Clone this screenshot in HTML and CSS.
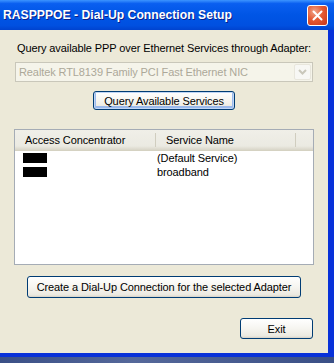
FILE: index.html
```html
<!DOCTYPE html>
<html lang="en">
<head>
    <meta charset="UTF-8">
    <title>RASPPPOE - Dial-Up Connection Setup</title>
    <link rel="stylesheet" href="styles.css">
</head>
<body>
    <div class="window">
        <div class="titlebar">
            <span class="title">RASPPPOE - Dial-Up Connection Setup</span>
            <button class="close-btn" aria-label="Close">
                <svg width="11" height="11" viewBox="0 0 11 11">
                    <path d="M1.5 1.5 L9.5 9.5 M9.5 1.5 L1.5 9.5" stroke="#fff" stroke-width="2" stroke-linecap="round"/>
                </svg>
            </button>
        </div>

        <div class="client">
            <div class="prompt">Query available PPP over Ethernet Services through Adapter:</div>

            <!-- Adapter combo (disabled) -->
            <div class="combo">
                <span class="combo-text">Realtek RTL8139 Family PCI Fast Ethernet NIC</span>
                <span class="combo-arrow">
                    <svg width="9" height="6" viewBox="0 0 9 6">
                        <path d="M1 1 L4.5 4.5 L8 1" fill="none" stroke="#c9c7ba" stroke-width="2"/>
                    </svg>
                </span>
            </div>

            <button class="xp-btn query-btn">Query Available Services</button>

            <!-- Service list -->
            <div class="listview">
                <div class="list-header">
                    <div class="col col-ac">Access Concentrator</div>
                    <div class="col col-sn">Service Name</div>
                    <div class="col col-rest"></div>
                </div>
                <div class="list-row">
                    <div class="cell cell-ac"><span class="redact r1"></span></div>
                    <div class="cell">(Default Service)</div>
                </div>
                <div class="list-row">
                    <div class="cell cell-ac"><span class="redact r2"></span></div>
                    <div class="cell">broadband</div>
                </div>
            </div>

            <button class="xp-btn create-btn">Create a Dial-Up Connection for the selected Adapter</button>

            <div class="footer">
                <button class="xp-btn exit-btn">Exit</button>
            </div>
        </div>
    </div>
    <div class="desktop"></div>
</body>
</html>
```

FILE: styles.css
```css
* {
    margin: 0;
    padding: 0;
    box-sizing: border-box;
}

body {
    width: 334px;
    height: 363px;
    overflow: hidden;
    font-family: 'Liberation Sans', Arial, sans-serif;
    font-size: 11px;
    letter-spacing: -0.1px;
    color: #000;
    background: #3a4f86;
}

.window {
    display: flex;
    flex-direction: column;
    height: 357px;
    border-right: 6px solid #0831d9;
    border-bottom: 4px solid #0831d9;
    background: #ece9d8;
}

.titlebar {
    height: 30px;
    display: flex;
    align-items: center;
    justify-content: space-between;
    padding: 0 6px 0 3px;
    margin-right: -6px;
    background: linear-gradient(#3d95ff 0%, #0a5ff0 12%, #0055e5 50%, #0050e0 85%, #0043cf 100%);
}

.title {
    color: #fff;
    font-family: 'Liberation Sans', Arial, sans-serif;
    font-weight: bold;
    font-size: 12.2px;
    letter-spacing: 0;
    text-shadow: 1px 1px 0 #0a1e8a;
}

.close-btn {
    width: 21px;
    height: 21px;
    border: 1px solid #fff;
    border-radius: 3px;
    background: radial-gradient(circle at 35% 30%, #f0a58a 0%, #e45a33 45%, #c8361a 100%);
    display: flex;
    align-items: center;
    justify-content: center;
}

.client {
    flex: 1;
    display: flex;
    flex-direction: column;
    align-items: center;
    padding-top: 12px;
}

.prompt {
    line-height: 13px;
    height: 13px;
}

.combo {
    margin-top: 7px;
    width: 298px;
    height: 20px;
    border: 1px solid #c9c7ba;
    background: #f5f4ea;
    display: flex;
    align-items: center;
    justify-content: space-between;
    padding: 0 1px 0 3px;
}

.combo-text {
    color: #aca899;
}

.combo-arrow {
    width: 17px;
    height: 16px;
    background: #f7f7f4;
    border: 1px solid #e8e6dc;
    border-radius: 2px;
    display: flex;
    align-items: center;
    justify-content: center;
}

.xp-btn {
    font-family: inherit;
    font-size: 11px;
    letter-spacing: -0.1px;
    color: #000;
    border: 1px solid #003c74;
    border-radius: 3px;
    background: linear-gradient(#ffffff 0%, #f6f5f0 50%, #ebe9e0 90%, #d6d0c5 100%);
}

.query-btn {
    margin-top: 9px;
    width: 142px;
    height: 19px;
    box-shadow: inset 0 0 0 1px #c0d6f5, inset 0 -1px 0 2px #9bb9eb;
}

.listview {
    margin-top: 19px;
    width: 300px;
    height: 136px;
    border: 1px solid #a5acb5;
    background: #fff;
}

.list-header {
    display: flex;
    height: 21px;
    background: linear-gradient(#f0efe8, #ebeae2 80%, #d8d5c8);
    border-bottom: 1px solid #d5d2c2;
}

.col {
    display: flex;
    align-items: center;
    padding-left: 10px;
    border-right: 1px solid #d0cdbf;
    margin: 3px 0;
}

.col-ac {
    width: 141px;
}

.col-sn {
    width: 140px;
}

.col-rest {
    flex: 1;
    border-right: none;
}

.list-row {
    display: flex;
    height: 14px;
    align-items: center;
}

.cell {
    line-height: 14px;
}

.cell-ac {
    width: 142px;
    padding-left: 8px;
}

.redact {
    display: block;
    width: 24px;
    height: 10px;
    background: #000;
}

.r1 {
    box-shadow: inset -4px 1px 0 -2px #000;
}

.create-btn {
    margin-top: 11px;
    width: 274px;
    height: 22px;
}

.footer {
    align-self: stretch;
    display: flex;
    justify-content: flex-end;
    padding-right: 15px;
    margin-top: 20px;
}

.exit-btn {
    width: 73px;
    height: 21px;
}

.desktop {
    height: 6px;
    background: linear-gradient(90deg, #3a4f86, #55689a 40%, #3a4f86);
}
```
